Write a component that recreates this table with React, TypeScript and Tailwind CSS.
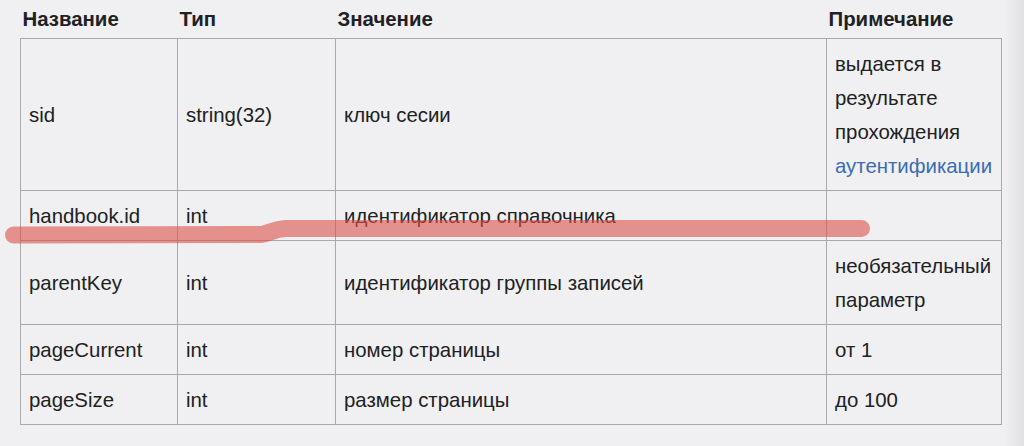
import React from 'react';

type Row = {
  name: string;
  type: string;
  value: string;
  note: React.ReactNode;
};

const rows: Row[] = [
  {
    name: 'sid',
    type: 'string(32)',
    value: 'ключ сесии',
    note: (
      <>
        выдается в<br />
        результате
        <br />
        прохождения
        <br />
        <span className="text-[#3a6cb4]">аутентификации</span>
      </>
    ),
  },
  { name: 'handbook.id', type: 'int', value: 'идентификатор справочника', note: '' },
  {
    name: 'parentKey',
    type: 'int',
    value: 'идентификатор группы записей',
    note: (
      <>
        необязательный
        <br />
        параметр
      </>
    ),
  },
  { name: 'pageCurrent', type: 'int', value: 'номер страницы', note: 'от 1' },
  { name: 'pageSize', type: 'int', value: 'размер страницы', note: 'до 100' },
];

const th = 'px-[2px] pt-[2px] pb-[2px] text-left font-bold align-middle';
const td = 'border border-[#a9a9ab] px-[8px] pt-[8px] pb-[7px] align-middle';

export default function App() {
  return (
    <div className="relative flex h-[446px] w-[1024px] overflow-hidden bg-[#f0f0f2] font-['Liberation_Sans',Arial,sans-serif] text-[20.4px] leading-[34px] text-[#202122]">
      <div className="flex-1 pl-[20px]">
        <table className="w-[981px] table-fixed border-collapse">
          <colgroup>
            <col className="w-[157px]" />
            <col className="w-[158px]" />
            <col className="w-[491px]" />
            <col className="w-[175px]" />
          </colgroup>
          <thead>
            <tr>
              <th className={th}>Название</th>
              <th className={th}>Тип</th>
              <th className={th}>Значение</th>
              <th className={th}>Примечание</th>
            </tr>
          </thead>
          <tbody>
            {rows.map((r) => (
              <tr key={r.name}>
                <td className={td}>{r.name}</td>
                <td className={td}>{r.type}</td>
                <td className={td}>{r.value}</td>
                <td className={td + ' whitespace-nowrap'}>{r.note}</td>
              </tr>
            ))}
          </tbody>
        </table>
      </div>
      <div className="w-[20px] bg-gradient-to-r from-[#f0f0f2] to-[#e1e1e3]" />

      {/* hand-drawn highlight stroke over the handbook.id row */}
      <svg className="pointer-events-none absolute left-0 top-0" width="1024" height="446">
        <path
          d="M 13.5 235 L 262 234.5 C 270 233 274 229 286 228.5 L 861.5 228.5"
          fill="none"
          stroke="#dc524a"
          strokeOpacity="0.6"
          strokeWidth="17"
          strokeLinecap="round"
          strokeLinejoin="round"
        />
      </svg>
    </div>
  );
}
